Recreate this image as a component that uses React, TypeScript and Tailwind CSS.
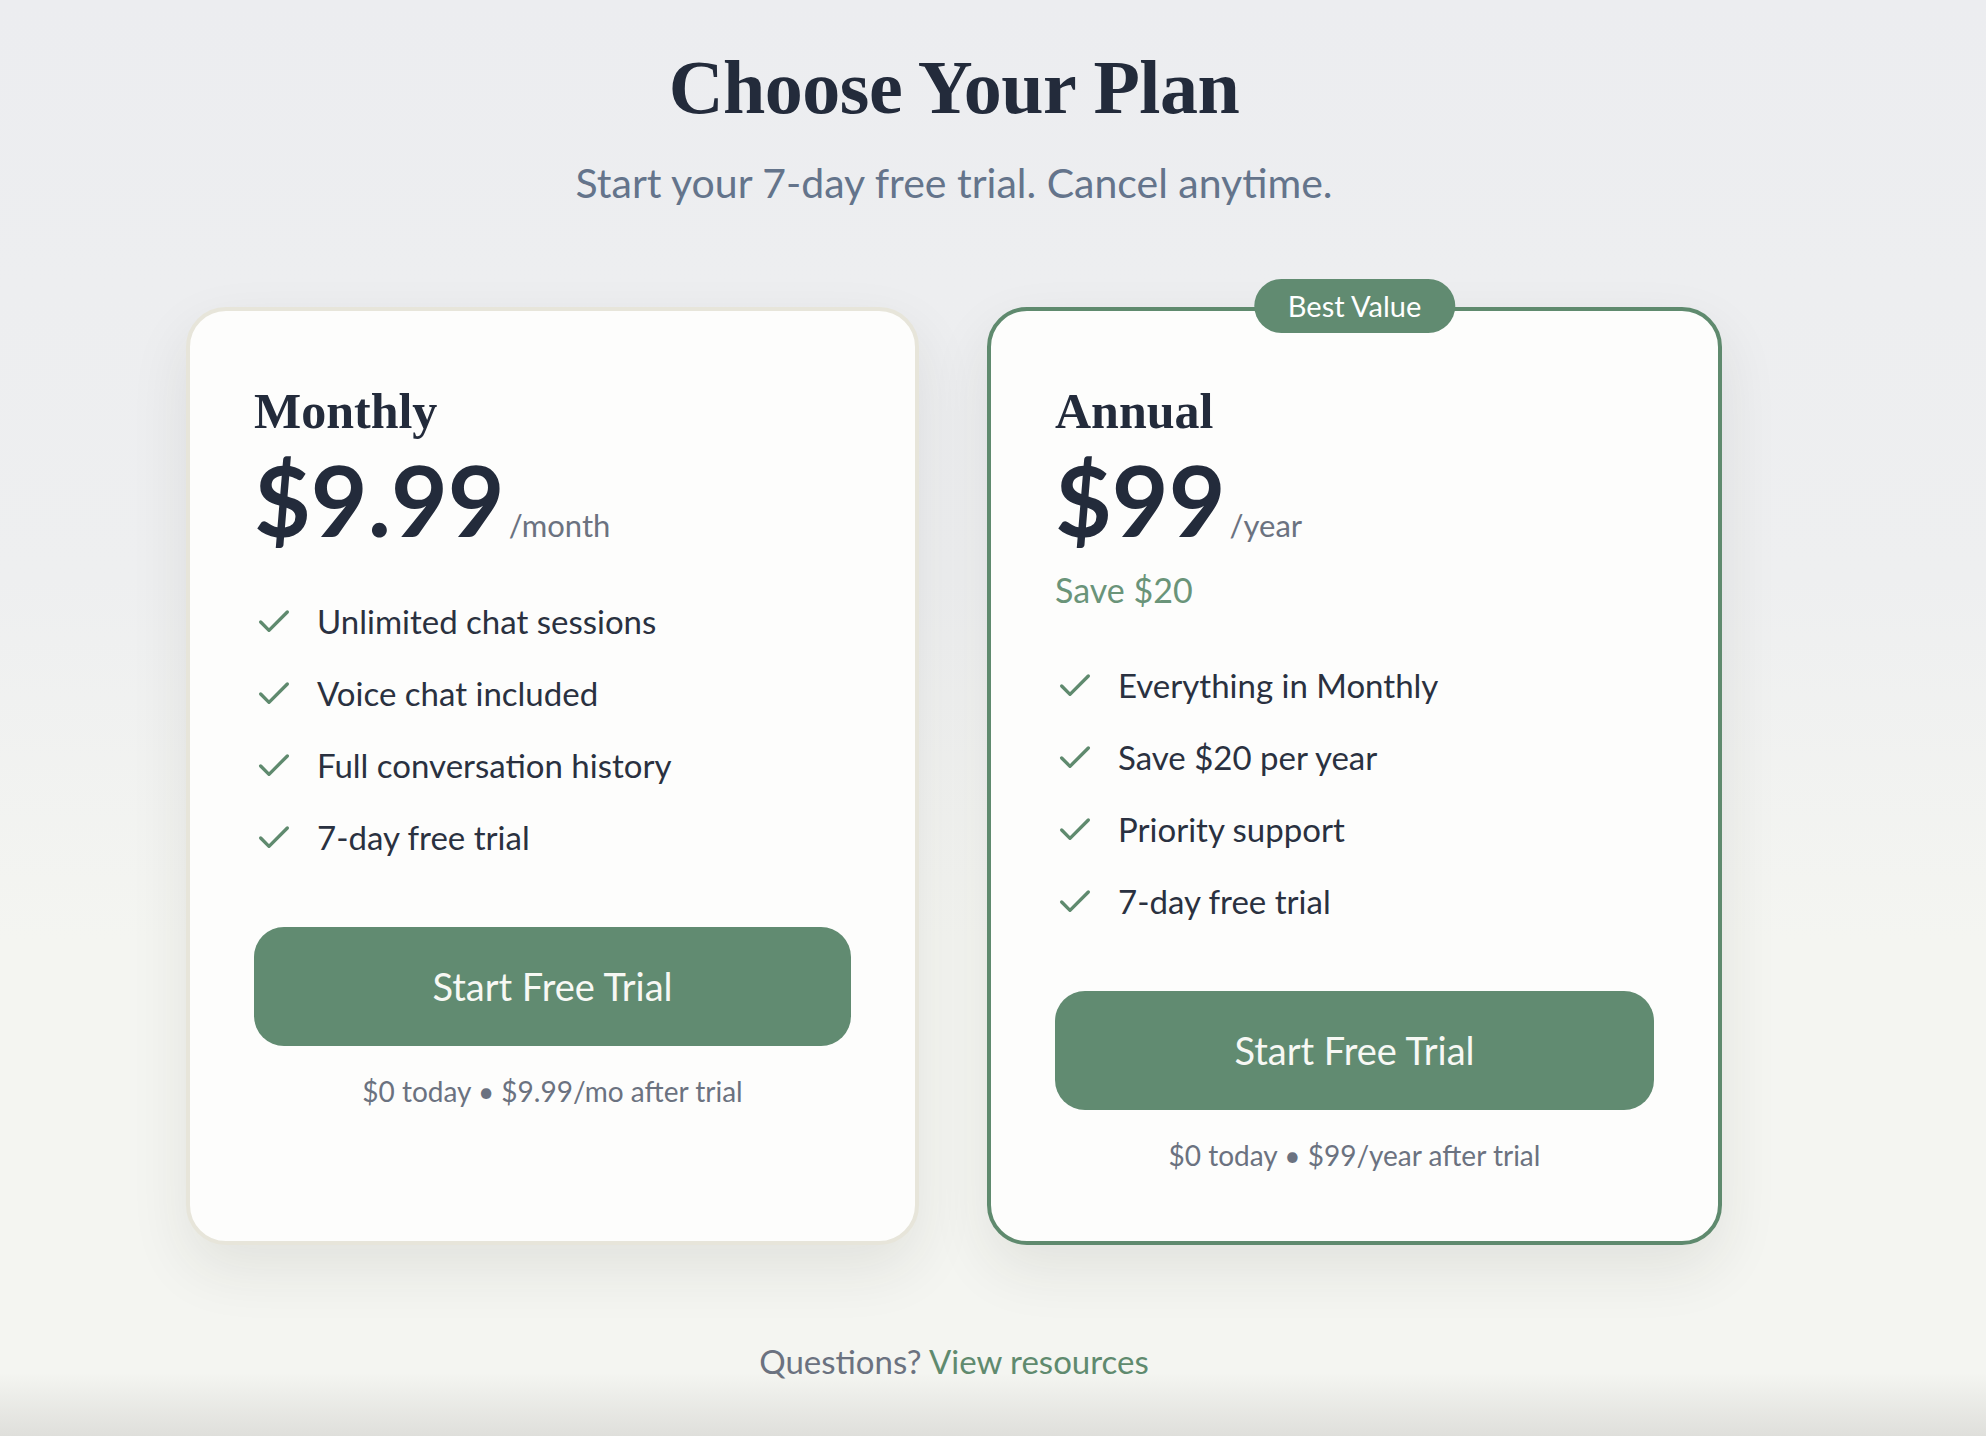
import { Check } from "lucide-react";

const serif = { fontFamily: '"Liberation Serif", "DejaVu Serif", serif' };

type Plan = {
  name: string;
  price: string;
  per: string;
  save?: string;
  features: string[];
  caption: string;
  featured?: boolean;
};

const plans: Plan[] = [
  {
    name: "Monthly",
    price: "$9.99",
    per: "/month",
    features: [
      "Unlimited chat sessions",
      "Voice chat included",
      "Full conversation history",
      "7-day free trial",
    ],
    caption: "$0 today • $9.99/mo after trial",
  },
  {
    name: "Annual",
    price: "$99",
    per: "/year",
    save: "Save $20",
    features: [
      "Everything in Monthly",
      "Save $20 per year",
      "Priority support",
      "7-day free trial",
    ],
    caption: "$0 today • $99/year after trial",
    featured: true,
  },
];

function PlanCard({ plan }: { plan: Plan }) {
  return (
    <div
      className={
        "relative flex flex-col rounded-[40px] border-4 bg-[#fdfdfc] px-[64px] pt-[70px] pb-[66px] shadow-[0_24px_60px_rgba(40,40,30,0.09)] " +
        (plan.featured ? "border-[#5f8a6e]" : "border-[#e7e5da]")
      }
    >
      {plan.featured && (
        <div className="absolute left-1/2 top-[-32px] flex h-[54px] -translate-x-1/2 items-center rounded-full bg-[#618b71] px-[34px] text-[29px] text-white">
          Best Value
        </div>
      )}
      <h2 className="text-[50px] font-bold leading-[60px] text-[#232b3b]" style={serif}>
        {plan.name}
      </h2>
      <div className="mt-[5px] flex items-baseline">
        <span className="text-[98px] font-bold leading-[106px] text-[#232b3b]">{plan.price}</span>
        <span className="ml-[4px] text-[31px] text-[#6b7280]">{plan.per}</span>
      </div>
      {plan.save && (
        <div className="mt-[14px] text-[34px] leading-[48px] text-[#6a9479]">{plan.save}</div>
      )}
      <ul className={"flex flex-col gap-[24px] " + (plan.save ? "mt-[48px]" : "mt-[46px]")}>
        {plan.features.map((f) => (
          <li key={f} className="flex h-[48px] items-center gap-[23px] text-[33px] text-[#2a3140]">
            <Check className="h-[40px] w-[40px] shrink-0 text-[#5f8a6e]" strokeWidth={2} />
            <span>{f}</span>
          </li>
        ))}
      </ul>
      <button className="mt-[65px] flex h-[119px] w-full items-center justify-center rounded-[30px] bg-[#618b71] text-[38px] text-[#f7f8f4]">
        Start Free Trial
      </button>
      <p className="mt-[25px] text-center text-[28px] leading-[40px] text-[#6b7280]">{plan.caption}</p>
    </div>
  );
}

export default function App() {
  return (
    <div
      className="min-h-screen w-full bg-[linear-gradient(to_bottom,#ecedf0_0%,#eeeff0_40%,#f4f5f1_65%,#f4f5f1_95%,#dcdcd8_100%)] pr-[78px] pt-[44px] pb-[60px]"
      style={{ fontFamily: 'Lato, "Open Sans", "Noto Sans", sans-serif' }}
    >
      <div className="flex flex-col items-center">
        <h1 className="text-[76px] font-bold leading-[86px] tracking-[-0.5px] text-[#232b3b]" style={serif}>
          Choose Your Plan
        </h1>
        <p className="mt-[29px] text-[41px] leading-[48px] text-[#64748b]">
          Start your 7-day free trial. Cancel anytime.
        </p>
        <div className="mt-[100px] grid grid-cols-[733px_735px] gap-[68px]">
          {plans.map((p) => (
            <PlanCard key={p.name} plan={p} />
          ))}
        </div>
        <p className="mt-[92px] text-[33px] leading-[48px] text-[#6b7280]">
          Questions? <span className="text-[#5f8a6e]">View resources</span>
        </p>
      </div>
    </div>
  );
}
